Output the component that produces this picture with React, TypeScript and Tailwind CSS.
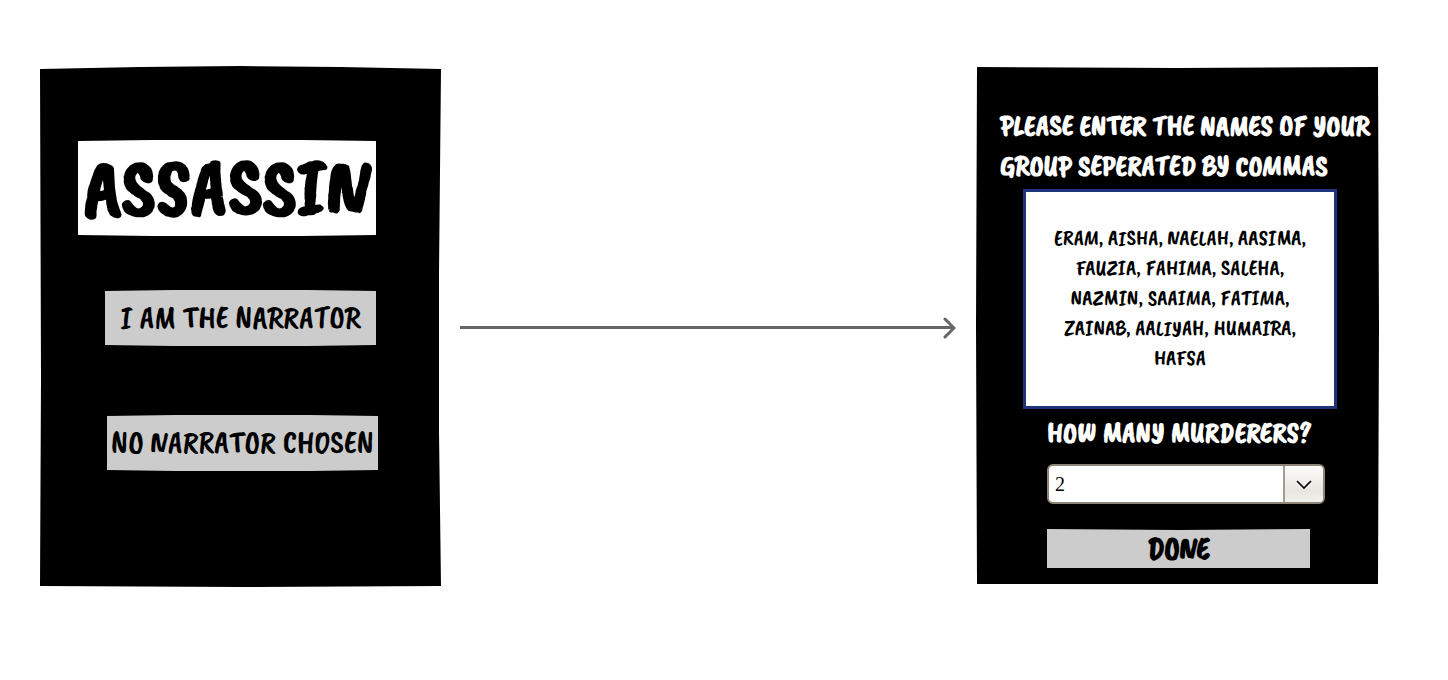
import { useState } from "react";

const brush = "font-['Caveat_Brush','Liberation_Sans_Narrow','Liberation_Sans',sans-serif]";

const bulge =
  "[clip-path:polygon(0_1px,25%_0,75%_0,100%_1px,100%_calc(100%_-_1px),75%_100%,25%_100%,0_calc(100%_-_1px))]";

const greyButton = `block cursor-pointer whitespace-nowrap bg-[#cccccc] text-center text-[32px] leading-none text-black ${brush}`;

function StartScreen() {
  return (
    <section className="min-h-[521px] w-[401px] shrink-0 bg-black pt-[74px] [clip-path:polygon(0_3px,25%_1px,50%_0,75%_1px,100%_3px,calc(100%_-_2px)_40%,calc(100%_-_2px)_70%,100%_calc(100%_-_1px),50%_100%,0_calc(100%_-_1px),1px_60%)]">
      <h1
        className={`ml-[38px] flex h-24 w-[298px] items-center justify-center bg-white text-[80px] leading-none font-bold text-black ${brush} ${bulge}`}
      >
        ASSASSIN
      </h1>
      <button type="button" className={`mt-[54px] ml-[65px] h-14 w-[271px] ${greyButton} ${bulge}`}>
        I AM THE NARRATOR
      </button>
      <button type="button" className={`mt-[69px] ml-[67px] h-14 w-[271px] ${greyButton} ${bulge}`}>
        NO NARRATOR CHOSEN
      </button>
    </section>
  );
}

function Arrow() {
  return (
    <div className="mr-5 ml-[19px] flex min-w-10 flex-1 items-center self-center pt-0.5" aria-hidden="true">
      <div className="-mr-3 h-[3px] flex-1 bg-[#666666]" />
      <svg className="h-6 w-4 shrink-0" viewBox="0 0 16 24" fill="none" stroke="#666666" strokeWidth="3">
        <path d="M5 3 L14 12 L5 21" strokeLinecap="round" />
      </svg>
    </div>
  );
}

function SetupScreen() {
  const [names, setNames] = useState(
    "ERAM, AISHA, NAELAH, AASIMA, FAUZIA, FAHIMA, SALEHA, NAZMIN, SAAIMA, FATIMA, ZAINAB, AALIYAH, HUMAIRA, HAFSA"
  );
  const [murderers, setMurderers] = useState("2");

  return (
    <section className="mt-px min-h-[517px] w-[403px] shrink-0 bg-black pt-[39px] pb-4 pl-6 [clip-path:polygon(1px_0,50%_1px,calc(100%_-_1px)_0,100%_50%,calc(100%_-_1px)_100%,1px_100%,0_50%)]">
      <label htmlFor="names" className={`block text-[29px] leading-10 font-bold text-white ${brush}`}>
        PLEASE ENTER THE NAMES OF YOUR GROUP SEPERATED BY COMMAS
      </label>
      <textarea
        id="names"
        spellCheck={false}
        value={names}
        onChange={(e) => setNames(e.target.value)}
        className={`mt-[3px] ml-[23px] block h-[220px] w-[314px] resize-none overflow-hidden border-3 border-[#1f347d] bg-white px-5 pt-[31px] text-center text-[22px] leading-[30px] text-black outline-none ${brush}`}
      />
      <div className="ml-[47px]">
        <label htmlFor="murderers" className={`block pt-1 text-[29px] leading-10 font-bold text-white ${brush}`}>
          HOW MANY MURDERERS?
        </label>
        <div className="relative mt-[11px] w-[278px]">
          <select
            id="murderers"
            value={murderers}
            onChange={(e) => setMurderers(e.target.value)}
            className="block h-10 w-full appearance-none rounded-md border-2 border-[#8d8578] bg-white pl-1.5 font-['Liberation_Serif',serif] text-[20px] text-black outline-none"
          >
            <option>1</option>
            <option>2</option>
            <option>3</option>
          </select>
          <span className="pointer-events-none absolute inset-y-0.5 right-0.5 flex w-10 items-center justify-center rounded-r border-l-2 border-[#a39c92] bg-linear-to-b from-[#fcfbfa] via-[#e9e6e0] via-70% to-[#f3f1ee]">
            <svg className="h-4 w-4" viewBox="0 0 16 16" fill="none" stroke="#000000" strokeWidth="1.6">
              <path d="M1 5 L8 12 L15 5" />
            </svg>
          </span>
        </div>
        <button
          type="button"
          className={`mt-[25px] h-[39px] w-[263px] font-bold ${greyButton} [clip-path:polygon(0_0,50%_1px,100%_0,100%_100%,0_100%)]`}
        >
          DONE
        </button>
      </div>
    </section>
  );
}

export default function App() {
  return (
    <main className="min-h-screen bg-white pt-[66px] pr-[69px] pb-12 pl-10">
      <div className="flex items-start">
        <StartScreen />
        <Arrow />
        <SetupScreen />
      </div>
    </main>
  );
}
